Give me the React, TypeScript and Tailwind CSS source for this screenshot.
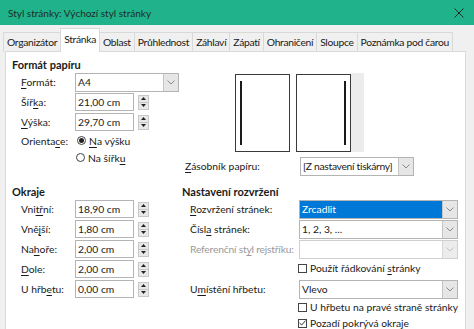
import React from 'react';

const U: React.FC<{ children: React.ReactNode }> = ({ children }) => <span className="underline underline-offset-2">{children}</span>;

const Chevron: React.FC<{ light?: boolean }> = ({ light }) => (
  <svg width="8" height="5" viewBox="0 0 8 5">
    <path d="M0.5 0.5 L4 4 L7.5 0.5" fill="none" stroke={light ? '#c2c2c2' : '#8a8a8a'} strokeWidth="1" />
  </svg>
);

const Select: React.FC<{ value?: string; width: string; active?: boolean; disabled?: boolean; tight?: boolean }> = ({ value, width, active, disabled, tight }) => (
  <div className={`${width} h-[19px] flex border ${disabled ? 'border-[#d0d0d0]' : 'border-[#b4b4b4]'} bg-white`}>
    <div className={`flex-1 flex items-center pl-[2px] whitespace-nowrap overflow-hidden ${tight ? 'tracking-[-0.3px]' : ''} ${active ? 'bg-[#0078d7] text-white' : ''}`}>{value}</div>
    <div className={`w-[15px] shrink-0 flex items-center justify-center border-l ${disabled ? 'border-[#d8d8d8] bg-[#ececec]' : 'border-[#c4c4c4] bg-[#e6e6e6]'}`}>
      <Chevron light={disabled} />
    </div>
  </div>
);

const Spin: React.FC<{ value: string }> = ({ value }) => (
  <div className="flex items-center">
    <div className="w-[59px] h-[18px] border border-[#b4b4b4] bg-white flex items-center pl-[2px]">{value}</div>
    <div className="ml-[4px] w-[11px] h-[15px] border border-[#c8c8c8] bg-[#e8e8e8] flex flex-col">
      <div className="flex-1 flex items-center justify-center border-b border-[#c8c8c8]">
        <svg width="5" height="3" viewBox="0 0 5 3"><path d="M0 3 L2.5 0 L5 3 Z" fill="#222" /></svg>
      </div>
      <div className="flex-1 flex items-center justify-center">
        <svg width="5" height="3" viewBox="0 0 5 3"><path d="M0 0 L2.5 3 L5 0 Z" fill="#222" /></svg>
      </div>
    </div>
  </div>
);

const Row: React.FC<{ label: React.ReactNode; children: React.ReactNode; h?: string }> = ({ label, children, h = 'h-[20px]' }) => (
  <div className={`flex items-center ${h} pl-[9px]`}>
    <div className="w-[54px] shrink-0 whitespace-nowrap">{label}</div>
    {children}
  </div>
);

const RRow: React.FC<{ label: React.ReactNode; children: React.ReactNode; disabled?: boolean }> = ({ label, children, disabled }) => (
  <div className="flex items-center h-[20px] pl-[8px]">
    <div className={`w-[109px] shrink-0 whitespace-nowrap ${disabled ? 'text-[#9a9a9a] tracking-[-0.2px]' : ''}`}>{label}</div>
    {children}
  </div>
);

const Check: React.FC<{ label: React.ReactNode; checked?: boolean; h?: string }> = ({ label, checked, h = 'h-[16px]' }) => (
  <div className={`flex items-center ${h} pl-[116px] whitespace-nowrap`}>
    <div className="w-[9px] h-[9px] shrink-0 border border-[#444] bg-white flex items-center justify-center mr-[3px]">
      {checked && (
        <svg width="7" height="6" viewBox="0 0 7 6"><path d="M0.5 3 L2.7 5 L6.5 0.6" fill="none" stroke="#333" strokeWidth="1" /></svg>
      )}
    </div>
    <span>{label}</span>
  </div>
);

const Radio: React.FC<{ checked?: boolean }> = ({ checked }) => (
  <div className="w-[9px] h-[9px] rounded-full border border-[#444] bg-white flex items-center justify-center mr-[3px]">
    {checked && <div className="w-[5px] h-[5px] rounded-full bg-[#222]" />}
  </div>
);

const tabs = ['Organizátor', 'Stránka', 'Oblast', 'Průhlednost', 'Záhlaví', 'Zápatí', 'Ohraničení', 'Sloupce', 'Poznámka pod čarou'];

export default function App() {
  return (
    <div className="w-[474px] h-[329px] bg-[#f0f0f0] overflow-hidden flex flex-col text-[10.3px] text-[#1a1a1a] font-['Lato',sans-serif] leading-none">
      <div className="h-[25px] shrink-0 bg-[#20b28b] flex items-center justify-between pl-[8px] pr-[10px]">
        <span className="text-[10px] text-[#1d2b26]">Styl stránky: Výchozí styl stránky</span>
        <svg width="10" height="10" viewBox="0 0 10 10"><path d="M0.5 0.5 L9.5 9.5 M9.5 0.5 L0.5 9.5" stroke="#1d2b26" strokeWidth="1" /></svg>
      </div>
      <div className="h-[27px] shrink-0 flex items-end pl-[4px] text-[10.3px] tracking-[-0.3px]">
        {tabs.map((t) => {
          const sel = t === 'Stránka';
          return (
            <div
              key={t}
              className={`-ml-px flex items-center justify-center px-[3px] border border-b-0 border-[#d9d9d9] whitespace-nowrap ${sel ? 'h-[24px] bg-white relative z-10 pb-[3px]' : 'h-[20px] bg-[#f0f0f0]'}`}
            >
              {t}
            </div>
          );
        })}
      </div>
      <div className="ml-[5px] w-[461px] flex-1 bg-white border border-[#d9d9d9] -mt-px pl-[6px]">
        <div className="flex">
          <div className="w-[170px] shrink-0 pt-[4px]">
            <div className="h-[16px] flex items-center font-bold text-[11px]">Formát papíru</div>
            <Row label={<><U>F</U>ormát:</>}><Select value="A4" width="w-[104px]" /></Row>
            <Row label={<>Šíř<U>k</U>a:</>}><Spin value="21,00 cm" /></Row>
            <Row label={<><U>V</U>ýška:</>}><Spin value="29,70 cm" /></Row>
            <Row h="h-[18px]" label={<>Orienta<U>c</U>e:</>}>
              <div className="flex items-center ml-[2px]"><Radio checked /><U>N</U>a výšku</div>
            </Row>
            <Row h="h-[16px]" label="">
              <div className="flex items-center ml-[1px]"><Radio />Na šířk<U>u</U></div>
            </Row>
          </div>
          <div className="flex-1 pt-[21px]">
            <div className="ml-[53px] flex h-[79px] w-[129px]">
              <div className="w-[55px] h-[78px] mt-[1px] border border-[#3a3a3a] bg-white flex pl-[4px] py-[6px]">
                <div className="w-[2px] h-full bg-[#1a1a1a]" />
              </div>
              <div className="w-[6px]" />
              <div className="w-[55px] h-[78px] mt-[1px] border border-[#3a3a3a] bg-white flex justify-end pr-[4px] py-[6px]">
                <div className="w-[2px] h-full bg-[#1a1a1a]" />
              </div>
              <div className="flex-1 bg-[#ececec]" />
            </div>
            <div className="mt-[5px] flex items-center h-[19px] pl-[3px]">
              <div className="w-[115px] shrink-0"><U>Z</U>ásobník papíru:</div>
              <Select value="[Z nastavení tiskárny]" width="w-[114px]" tight />
            </div>
          </div>
        </div>
        <div className="flex mt-[7px]">
          <div className="w-[170px] shrink-0">
            <div className="h-[16px] flex items-center font-bold text-[11px]">Okraje</div>
            <Row label={<>Vni<U>tř</U>ní:</>}><Spin value="18,90 cm" /></Row>
            <Row label={<>Vně<U>j</U>ší:</>}><Spin value="1,80 cm" /></Row>
            <Row label={<>Na<U>h</U>oře:</>}><Spin value="2,00 cm" /></Row>
            <Row label={<><U>D</U>ole:</>}><Spin value="2,00 cm" /></Row>
            <Row label={<>U hřb<U>e</U>tu:</>}><Spin value="0,00 cm" /></Row>
          </div>
          <div className="flex-1">
            <div className="h-[16px] flex items-center font-bold text-[11px]">Nastavení rozvržení</div>
            <RRow label={<><U>R</U>ozvržení stránek:</>}><Select value="Zrcadlit" width="w-[159px]" active /></RRow>
            <RRow label={<>Čísl<U>a</U> stránek:</>}><Select value="1, 2, 3, ..." width="w-[159px]" /></RRow>
            <RRow disabled label={<>Referenční st<U>y</U>l rejstříku:</>}><Select width="w-[159px]" disabled /></RRow>
            <Check h="h-[18px]" label={<>Použít řádkování{' '}<U>s</U>tránky</>} />
            <div className="mt-[2px]">
              <RRow label={<>U<U>m</U>ístění hřbetu:</>}><Select value="Vlevo" width="w-[159px]" /></RRow>
            </div>
            <Check label="U hřbetu na pravé straně stránky" />
            <Check checked label="Pozadí pokrývá okraje" />
          </div>
        </div>
      </div>
    </div>
  );
}
